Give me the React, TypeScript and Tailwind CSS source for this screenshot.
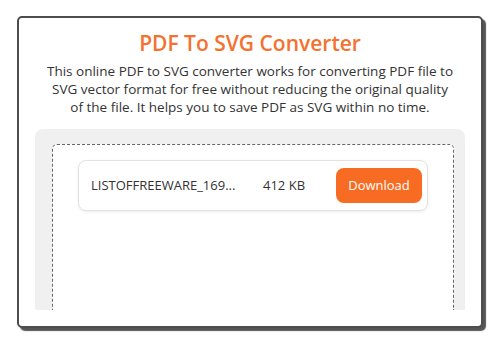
export default function App() {
  return (
    <div className="w-[500px] h-[345px] bg-white overflow-hidden font-['Open_Sans',sans-serif]">
      <div className="ml-[17px] mt-[16px] w-[466px] h-[312px] rounded-[5px] border-2 border-[#4d4d4d] bg-white shadow-[3px_3px_1px_#555] flex flex-col px-[16px] pb-[16px] overflow-hidden">
        <h1 className="text-center text-[#f47130] text-[21px] font-semibold leading-[26px] mt-[12px]">PDF To SVG Converter</h1>
        <p className="text-center text-[#333] text-[13.5px] leading-[18px] mt-[6px] px-[12px]">
          This online PDF to SVG converter works for converting PDF file to SVG vector format for free without reducing the original quality of the file. It helps you to save PDF as SVG within no time.
        </p>
        <div className="mt-[13px] flex-1 bg-[#f0f0f0] rounded-t-[8px] pt-[15px] pl-[17px] pr-[11px] flex">
          <div className="flex-1 bg-white border border-dashed border-b-0 border-[#666] rounded-t-[5px] px-[25px] pt-[15px]">
            <div className="h-[51px] rounded-[8px] border border-[#e2e2e2] shadow-[0_1px_3px_rgba(0,0,0,0.08)] flex items-center pl-[12px] pr-[5px]">
              <span className="text-[13px] text-[#333] w-[172px]">LISTOFFREEWARE_169...</span>
              <span className="text-[13px] text-[#333]">412 KB</span>
              <button className="ml-auto w-[86px] h-[35px] rounded-[8px] bg-[#f76b22] text-white text-[13px]">Download</button>
            </div>
          </div>
        </div>
      </div>
    </div>
  )
}
